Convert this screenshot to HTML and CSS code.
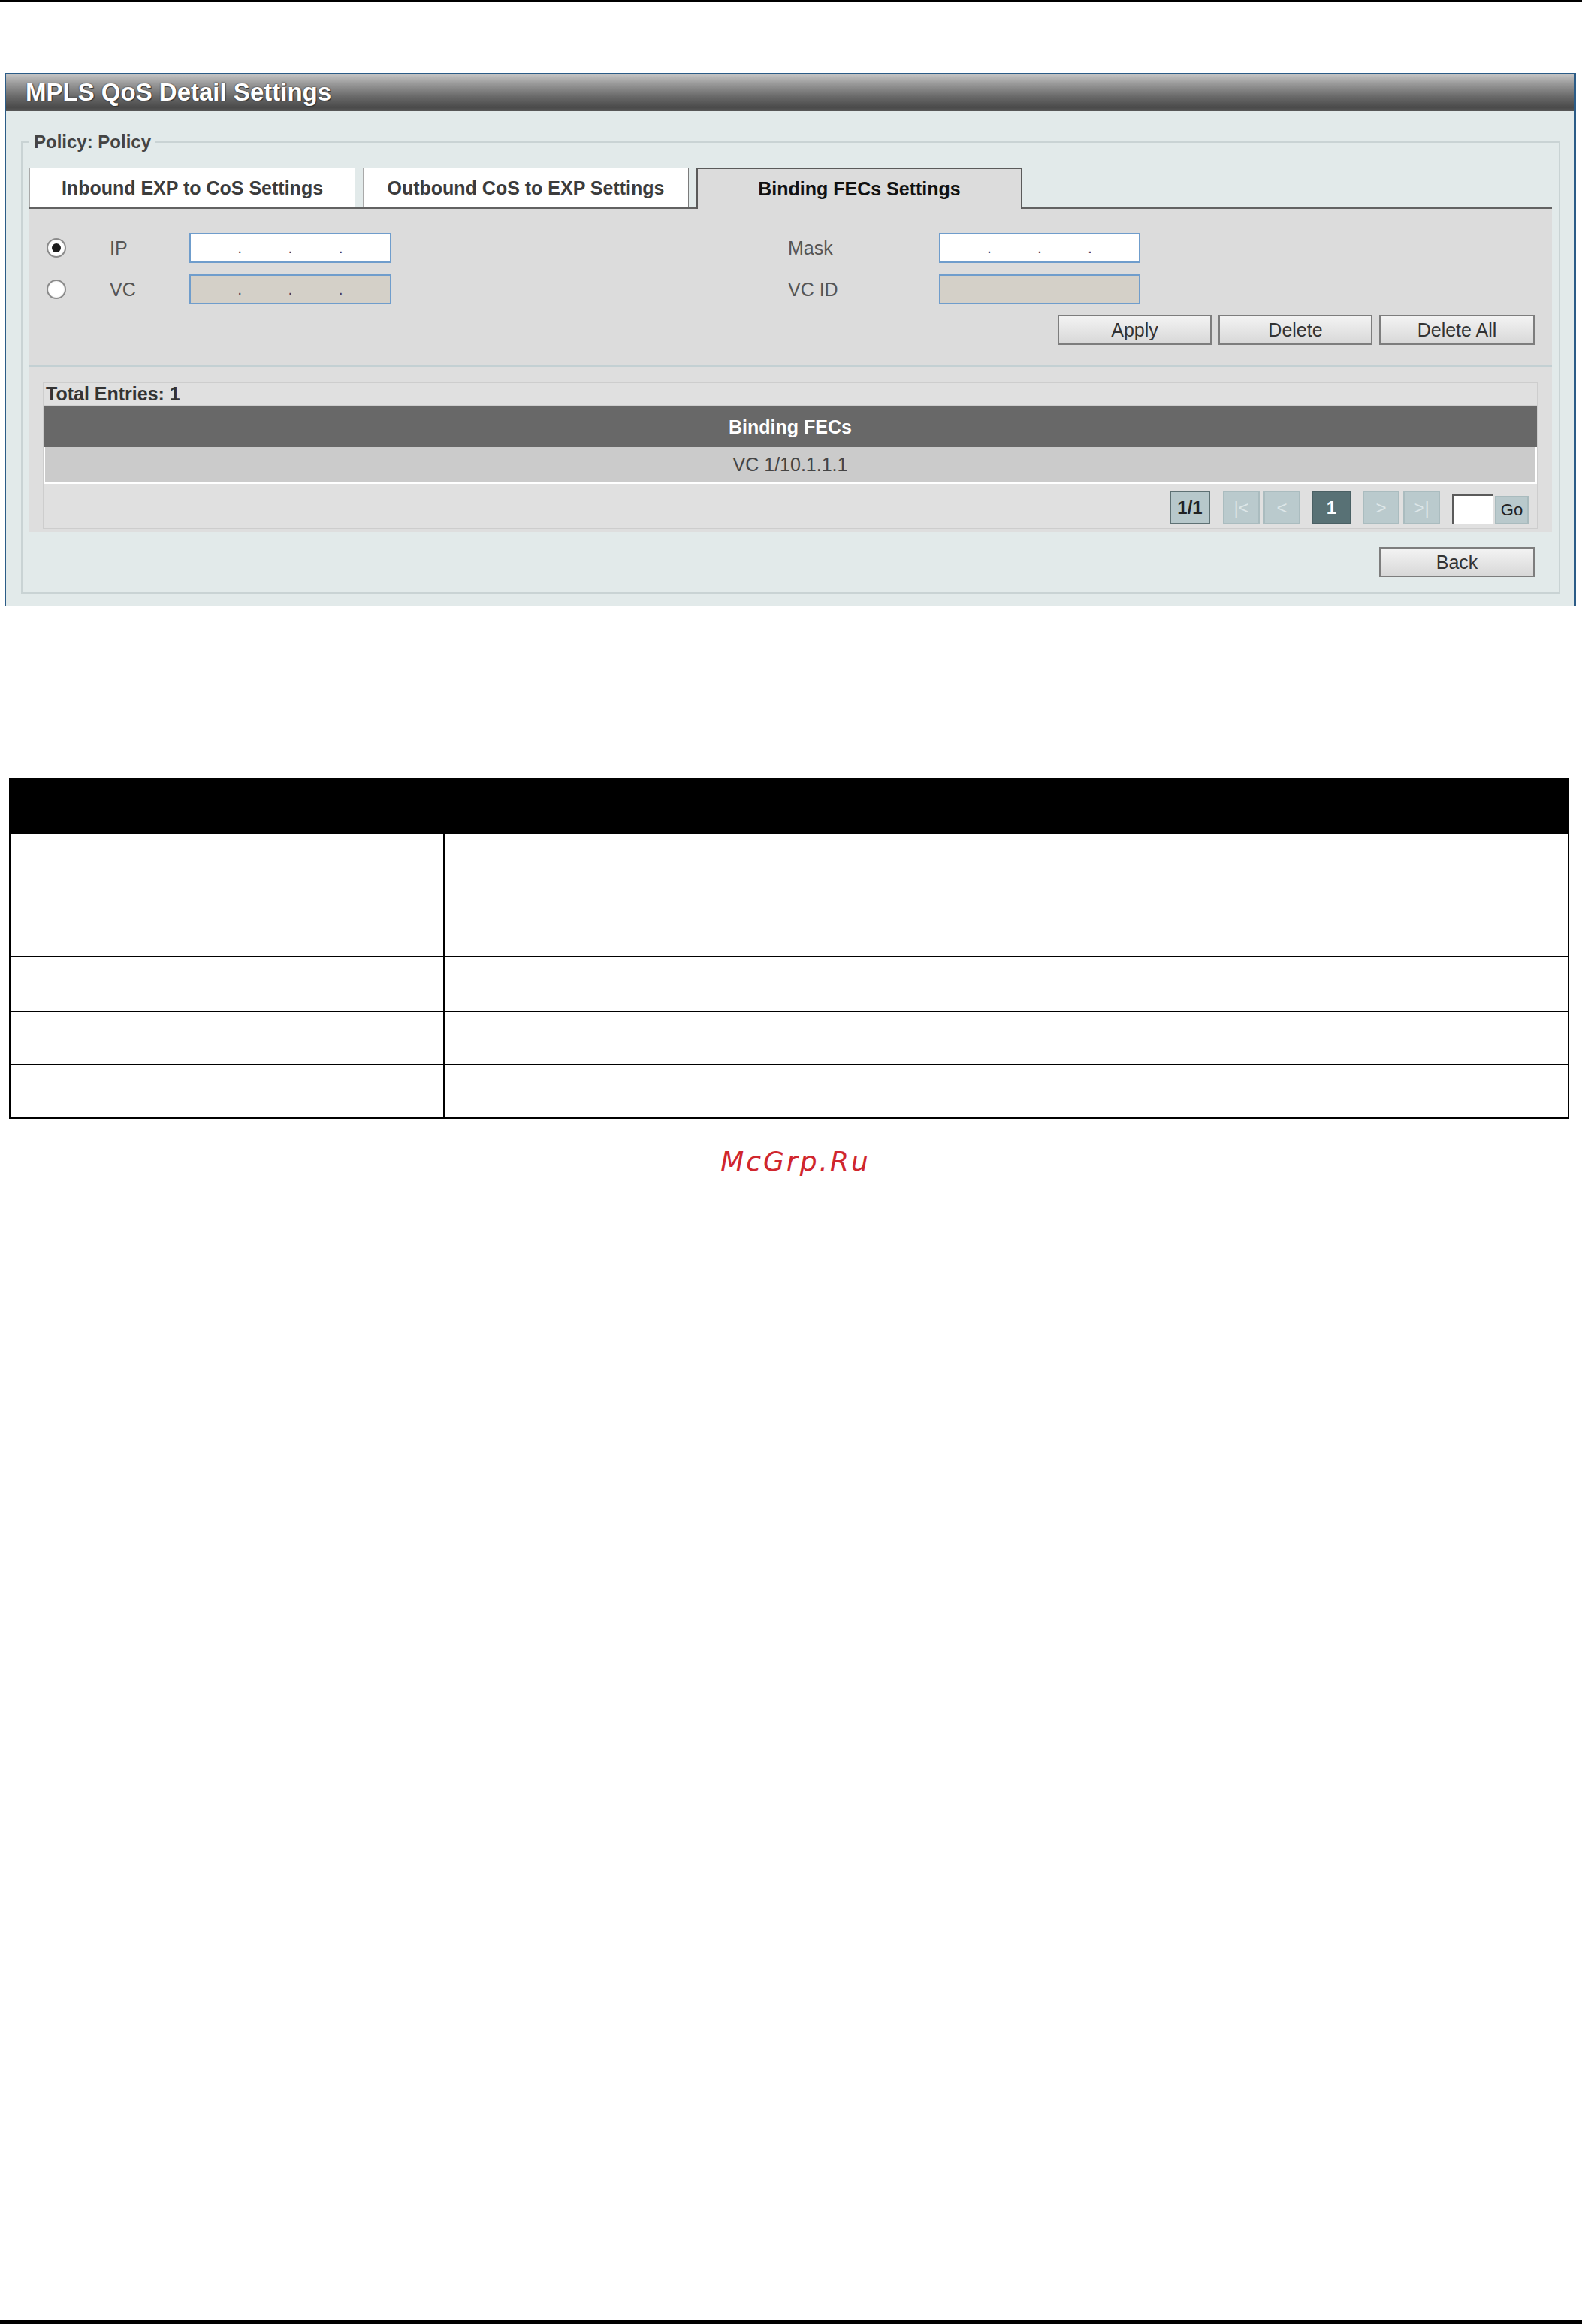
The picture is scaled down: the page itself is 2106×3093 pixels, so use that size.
FILE: index.html
```html
<!DOCTYPE html>
<html>
<head>
<meta charset="utf-8">
<title>MPLS QoS Detail Settings</title>
<link rel="stylesheet" href="styles.css">
</head>
<body>
<div class="page">
  <div class="topline"></div>
  <section class="panel">
    <div class="panel-head">MPLS QoS Detail Settings</div>
    <div class="panel-body">
      <fieldset class="policy">
        <legend>Policy: Policy</legend>
        <div class="tabs">
          <div class="tab">Inbound EXP to CoS Settings</div>
          <div class="tab">Outbound CoS to EXP Settings</div>
          <div class="tab active">Binding FECs Settings</div>
        </div>
        <div class="tab-content">
          <div class="form">
            <div class="form-grid">
              <span class="radio checked"></span>
              <span class="lbl">IP</span>
              <div class="ipbox"><span></span><i>.</i><span></span><i>.</i><span></span><i>.</i><span></span></div>
              <span></span>
              <span class="lbl">Mask</span>
              <div class="ipbox"><span></span><i>.</i><span></span><i>.</i><span></span><i>.</i><span></span></div>

              <span class="radio"></span>
              <span class="lbl">VC</span>
              <div class="ipbox disabled"><span></span><i>.</i><span></span><i>.</i><span></span><i>.</i><span></span></div>
              <span></span>
              <span class="lbl">VC ID</span>
              <div class="ipbox disabled"></div>
            </div>
            <div class="btn-row">
              <button class="btn">Apply</button>
              <button class="btn">Delete</button>
              <button class="btn wide">Delete All</button>
            </div>
          </div>
          <div class="entries-wrap">
            <div class="entries">
              <div class="total">Total Entries: 1</div>
              <div class="th">Binding FECs</div>
              <div class="td">VC 1/10.1.1.1</div>
              <div class="pager">
                <span class="pg pg-total">1/1</span>
                <span class="pg pg-off">|&lt;</span>
                <span class="pg pg-off">&lt;</span>
                <span class="pg pg-cur">1</span>
                <span class="pg pg-off">&gt;</span>
                <span class="pg pg-off">&gt;|</span>
                <span class="pg-input"></span>
                <span class="pg-go">Go</span>
              </div>
            </div>
          </div>
        </div>
        <div class="back-row">
          <button class="btn wide">Back</button>
        </div>
      </fieldset>
    </div>
  </section>

  <table class="doc-table">
    <tr class="head"><td class="c1"></td><td></td></tr>
    <tr class="r-tall"><td class="c1"></td><td></td></tr>
    <tr class="r-73"><td class="c1"></td><td></td></tr>
    <tr class="r-71"><td class="c1"></td><td></td></tr>
    <tr class="r-71"><td class="c1"></td><td></td></tr>
  </table>

  <div class="watermark">McGrp.Ru</div>

  <div class="bottomline"></div>
</div>
</body>
</html>
```

FILE: styles.css
```css
body {
  margin: 0;
  background: #fff;
}

.page {
  width: 2106px;
  height: 3093px;
  box-sizing: border-box;
  display: flex;
  flex-direction: column;
  font-family: "Liberation Sans", Arial, sans-serif;
  color: #333;
}

.topline {
  flex: none;
  height: 3px;
  background: #000;
}

/* ---------- panel ---------- */
.panel {
  flex: none;
  margin: 94px 0 0 6px;
  width: 2092px;
  box-sizing: border-box;
  border: 2px solid #2b5c87;
  border-bottom: none;
  background: #e2eaea;
}

.panel-head {
  height: 49px;
  line-height: 47px;
  padding-left: 26px;
  background: linear-gradient(#c4c4c4 0%, #9a9a9a 25%, #6a6a6a 60%, #4a4a4a 90%, #585858 100%);
  color: #fff;
  font-weight: bold;
  font-size: 33px;
  text-shadow: 0 0 2px #2a2a2a, 1px 1px 1px #333;
}

.panel-body {
  padding: 27px 19px 16px 20px;
}

.policy {
  margin: 0;
  min-width: 0;
  border: 2px solid #c9d3d4;
  padding: 20px 9px 20px 9px;
}

.policy legend {
  padding: 0 6px;
  font-size: 24px;
  line-height: 28px;
  font-weight: bold;
  color: #444;
}

/* ---------- tabs ---------- */
.tabs {
  display: flex;
  gap: 10px;
  height: 55px;
  box-sizing: border-box;
  border-bottom: 2px solid #626262;
}

.tab {
  width: 434px;
  box-sizing: border-box;
  display: flex;
  align-items: center;
  justify-content: center;
  background: #fff;
  border: 1px solid #a9a9a9;
  border-right-color: #7b7b7b;
  border-bottom: none;
  font-size: 25px;
  font-weight: bold;
  color: #3c3c3c;
}

.tab.active {
  align-self: flex-start;
  height: 55px;
  background: #dcdcdc;
  border: 2px solid #5a5a5a;
  border-bottom: none;
  color: #111;
}

.tab-content {
  background: #dcdcdc;
}

/* ---------- form ---------- */
.form {
  padding: 32px 23px 27px 0;
  border-bottom: 2px solid #c3d0d3;
}

.form-grid {
  display: grid;
  grid-template-columns: 107px 106px 269px 528px 201px 268px;
  grid-auto-rows: 40px;
  row-gap: 15px;
  align-items: center;
}

.radio {
  margin-left: 23px;
  width: 26px;
  height: 26px;
  box-sizing: border-box;
  border: 2px solid #8a8a8a;
  border-radius: 50%;
  background: radial-gradient(circle, #ffffff 55%, #e6e6e6 100%);
  display: flex;
  align-items: center;
  justify-content: center;
}

.radio.checked::after {
  content: "";
  width: 12px;
  height: 12px;
  border-radius: 50%;
  background: #1c1c1c;
}

.lbl {
  font-size: 25px;
  color: #555;
}

.ipbox {
  height: 40px;
  box-sizing: border-box;
  border: 2px solid #6f9dcc;
  background: #fff;
  display: flex;
  align-items: center;
}

.ipbox.disabled {
  background: #d4d0c8;
}

.ipbox span {
  flex: 1;
}

.ipbox i {
  font-style: normal;
  font-size: 14px;
  font-weight: bold;
  color: #4a3a5a;
  position: relative;
  top: 2px;
}

.btn-row {
  display: flex;
  justify-content: flex-end;
  gap: 9px;
  margin-top: 14px;
}

.btn {
  width: 205px;
  height: 40px;
  padding: 0;
  border: 2px solid #7d7d7d;
  border-radius: 0;
  background: linear-gradient(#f3f3f3, #d8d8d8);
  font-family: "Liberation Sans", Arial, sans-serif;
  font-size: 25px;
  color: #333;
}

.btn.wide {
  width: 207px;
}

/* ---------- entries table ---------- */
.entries-wrap {
  padding: 21px 19px 4px 18px;
  background: #dedede;
}

.entries {
  border: 1px solid #cdcdcd;
  background: #e0e0e0;
}

.total {
  height: 31px;
  box-sizing: border-box;
  line-height: 29px;
  padding-left: 3px;
  border-bottom: 2px solid #cfcfcf;
  font-size: 25px;
  font-weight: bold;
  color: #333;
}

.th {
  height: 54px;
  line-height: 54px;
  background: #686868;
  color: #fff;
  text-align: center;
  font-size: 25px;
  font-weight: bold;
}

.td {
  height: 49px;
  box-sizing: border-box;
  line-height: 47px;
  background: #cbcbcb;
  border: 2px solid #fff;
  border-top: none;
  text-align: center;
  font-size: 25px;
  color: #444;
}

.pager {
  height: 59px;
  box-sizing: border-box;
  display: flex;
  justify-content: flex-end;
  align-items: flex-end;
  padding: 0 11px 5px 0;
}

.pg {
  height: 45px;
  box-sizing: border-box;
  display: flex;
  align-items: center;
  justify-content: center;
  font-size: 24px;
}

.pg-total {
  width: 54px;
  margin-right: 17px;
  background: #b7c8cb;
  border: 2px solid #5e7174;
  font-weight: bold;
  color: #222;
}

.pg-off {
  width: 49px;
  background: #bacacd;
  border: 2px solid #aabcbf;
  color: #dde6e8;
}

.pg-off + .pg-off {
  margin-left: 5px;
}

.pg-cur {
  width: 53px;
  margin: 0 15px;
  background: #587175;
  border: 2px solid #4a6064;
  color: #fff;
  font-weight: bold;
}

.pg-input {
  width: 54px;
  height: 40px;
  box-sizing: border-box;
  margin-left: 16px;
  background: #fff;
  border-top: 2px solid #5a5a5a;
  border-left: 2px solid #5a5a5a;
}

.pg-go {
  width: 45px;
  height: 38px;
  box-sizing: border-box;
  margin-left: 3px;
  display: flex;
  align-items: center;
  justify-content: center;
  background: #b9c9cc;
  border: 2px solid #a9bbbe;
  font-size: 22px;
  color: #222;
}

.back-row {
  display: flex;
  justify-content: flex-end;
  padding-right: 23px;
  margin-top: 20px;
}

/* ---------- document table ---------- */
.doc-table {
  flex: none;
  margin: 229px 0 0 12px;
  width: 2077px;
  border-collapse: collapse;
  table-layout: fixed;
}

.doc-table td {
  border: 2px solid #000;
  padding: 0;
}

.doc-table .c1 {
  width: 576px;
}

.doc-table .head td {
  height: 71px;
  background: #000;
}

.doc-table .r-tall td {
  height: 162px;
}

.doc-table .r-73 td {
  height: 71px;
}

.doc-table .r-71 td {
  height: 69px;
}

/* ---------- watermark & footer ---------- */
.watermark {
  flex: none;
  margin-top: 36px;
  padding-left: 12px;
  text-align: center;
  font-family: "DejaVu Sans", sans-serif;
  font-style: italic;
  font-size: 36px;
  line-height: 42px;
  letter-spacing: 3px;
  color: #d0262d;
}

.bottomline {
  flex: none;
  margin-top: auto;
  height: 5px;
  background: #000;
}
```
